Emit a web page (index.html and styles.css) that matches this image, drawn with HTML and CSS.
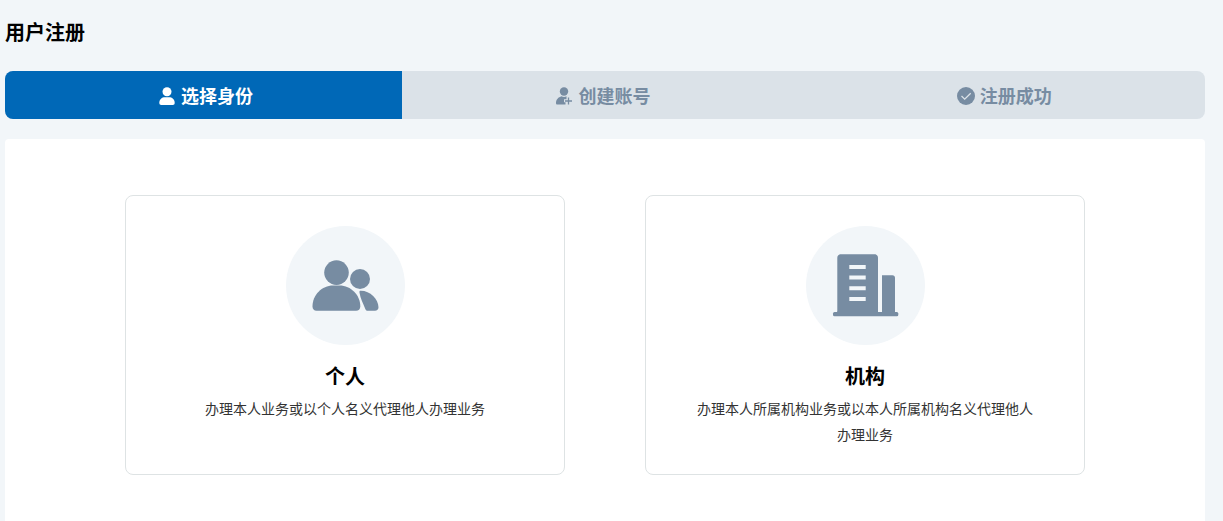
FILE: index.html
```html
<!DOCTYPE html>
<html lang="zh-CN">
<head>
<meta charset="utf-8">
<meta name="viewport" content="width=device-width, initial-scale=1">
<title>用户注册</title>
<link rel="stylesheet" href="styles.css">
</head>
<body>
<main class="page">
  <h1 class="page-title">用户注册</h1>
  <ol class="steps">
    <li class="step step-active" aria-current="step">
      <svg class="step-icon" viewBox="0 0 18 18" aria-hidden="true"><circle cx="9" cy="4.7" r="4.5"/><path d="M1.3 15.8C1.3 12.2 4 10.2 7 10.2h4c3 0 5.700 2 5.700 5.600 0 1.400-.7 2.200-2 2.200H3.300c-1.300 0-2-.8-2-2.200z"/></svg>
      <span>选择身份</span>
    </li>
    <li class="step">
      <svg class="step-icon" viewBox="0 0 18 18" aria-hidden="true"><circle cx="9" cy="4.500" r="4.200"/><path d="M1 16c0-3.500 2.400-5.800 5.500-6.700.8.4 1.600.6 2.500.6s1.700-.2 2.500-.6v3H9v3h1.500V17.500H2.300C1.500 17.500 1 17 1 16z"/><path class="step-plus" d="M13.500 10.500v7M10 14h7"/></svg>
      <span>创建账号</span>
    </li>
    <li class="step">
      <svg class="step-icon" viewBox="0 0 18 18" aria-hidden="true"><circle cx="9" cy="9" r="9"/><path class="step-tick" d="M4.500 9l3.200 3.100L13.700 6.300"/></svg>
      <span>注册成功</span>
    </li>
  </ol>
  <section class="panel">
    <button class="card" type="button">
      <span class="badge">
        <svg class="badge-icon" viewBox="0 0 119 119" aria-hidden="true"><circle cx="50.500" cy="46.600" r="12.300"/><circle cx="74" cy="53" r="10"/><path d="M26.500 80.500C26.500 69 36 59.600 47 59.600h6.500c11.500 0 20.800 9.700 20.800 20.900 0 2.800-1.800 4.300-4.300 4.300H30.500c-2.500 0-4-1.800-4-4.300z"/><path d="M74.500 64.800c9.500-.2 18 8.200 18 16.500 0 2.200-1.500 3.500-3.500 3.500h-7.500c-1 0-1.700-.8-2.200-1.900-2.300-5.600-4.800-10.100-5.800-16.100-.2-1.400.1-2 1-2z"/></svg>
      </span>
      <span class="card-title">个人</span>
      <span class="card-text">办理本人业务或以个人名义代理他人办理业务</span>
    </button>
    <button class="card" type="button">
      <span class="badge">
        <svg class="badge-icon" viewBox="0 0 119 119" aria-hidden="true"><path fill-rule="evenodd" d="M35 28.300h33.500c2 0 3.500 1.500 3.500 3.500v54H31.300v-54c0-2 1.500-3.500 3.700-3.500zM43.300 39v4h16.400v-4zM43.300 49.600v4h16.400v-4zM43.300 60.300v4h16.400v-4zM43.300 71v4h16.400v-4z"/><path d="M76 49.300h10.500c1.400 0 2.500 1.100 2.500 2.500v34H76z"/><rect x="27" y="86" width="65.300" height="4.300" rx="1.500"/><path d="M31.300 85h40.700v2H31.300zM76 85h13v2H76z"/></svg>
      </span>
      <span class="card-title">机构</span>
      <span class="card-text">办理本人所属机构业务或以本人所属机构名义代理他人办理业务</span>
    </button>
  </section>
</main>
</body>
</html>
```

FILE: styles.css
```css
* {
  box-sizing: border-box;
}

body {
  margin: 0;
  background: #f2f6f9;
  color: #000;
  font-family: "Noto Sans CJK SC", sans-serif;
}

.page {
  min-height: 100vh;
  display: flex;
  flex-direction: column;
  padding: 16px 18px 0 5px;
}

.page-title {
  margin: 0 0 23px;
  font-size: 20px;
  line-height: 32px;
  font-weight: 700;
}

.steps {
  display: grid;
  grid-template-columns: 33.1% 1fr 1fr;
  margin: 0 0 20px;
  padding: 0;
  list-style: none;
  background: #dbe2e8;
  border-radius: 8px;
  overflow: hidden;
}

.step {
  display: flex;
  align-items: center;
  justify-content: center;
  gap: 5px;
  height: 48px;
  color: #778ca2;
  font-size: 18px;
  line-height: 48px;
  font-weight: 700;
}

.step-active {
  padding-left: 4px;
  background: #0068b7;
  color: #fff;
}

.step-icon {
  width: 18px;
  height: 18px;
  margin-top: 2px;
  fill: currentColor;
}

.step-plus {
  fill: none;
  stroke: currentColor;
  stroke-width: 1.3;
}

.step-tick {
  fill: none;
  stroke: #dbe2e8;
  stroke-width: 1.3;
}

.panel {
  flex: 1;
  display: grid;
  grid-template-columns: 1fr 1fr;
  align-items: start;
  gap: 80px;
  padding: 56px 10% 40px;
  background: #fff;
  border-radius: 4px 4px 0 0;
}

.card {
  display: flex;
  flex-direction: column;
  align-items: center;
  min-height: 280px;
  padding: 30px 48px 24px;
  border: 1px solid #dee3e4;
  border-radius: 8px;
  background: #fff;
  color: #000;
  font-family: inherit;
  text-align: center;
  cursor: pointer;
}

.badge {
  width: 119px;
  height: 119px;
  border-radius: 50%;
  background: #f2f6f9;
}

.badge-icon {
  display: block;
  width: 100%;
  height: 100%;
  fill: #778ca2;
}

.card-title {
  margin-top: 15px;
  font-size: 20px;
  line-height: 32px;
  font-weight: 700;
}

.card-text {
  margin-top: 3px;
  color: #333;
  font-size: 14px;
  line-height: 26px;
}
```
